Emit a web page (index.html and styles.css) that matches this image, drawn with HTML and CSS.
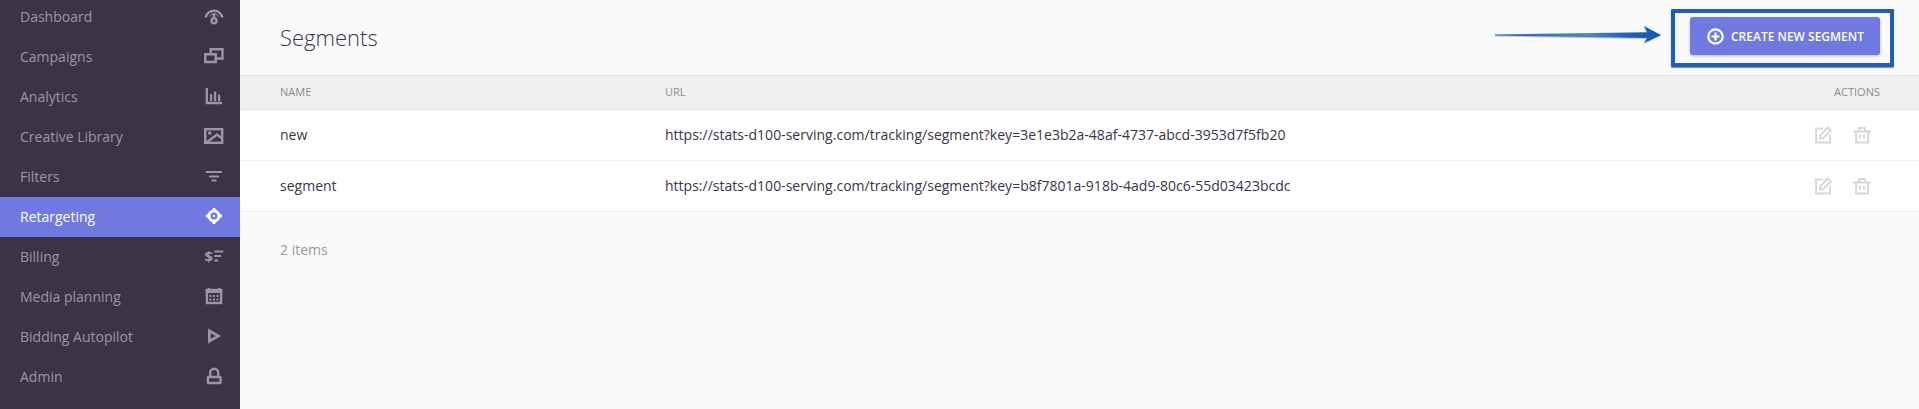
FILE: index.html
```html
<!DOCTYPE html>
<html lang="en">
<head>
<meta charset="utf-8">
<title>Segments</title>
<link rel="stylesheet" href="styles.css">
</head>
<body>
<div class="app">
  <nav class="sidebar">
    <a class="nav-item"><span>Dashboard</span>
      <svg class="ico" viewBox="0 0 20 20"><path d="M1.600 11.500A8.600 8.600 0 0 1 18.400 11.500" fill="none" stroke="currentColor" stroke-width="2.600"/><path d="M5.500 10.500A5 5 0 0 1 14.500 10.500" fill="none" stroke="currentColor" stroke-width="1"/><circle cx="10" cy="14.700" r="2.500" fill="none" stroke="currentColor" stroke-width="2.400"/><rect x="8.800" y="7" width="2.400" height="5" fill="currentColor"/></svg></a>
    <a class="nav-item"><span>Campaigns</span>
      <svg class="ico" viewBox="0 0 20 20"><path d="M1.300 8.300h10.400V16H1.300z M6.700 8.300V3.200h11.800v9.300h-6.800" fill="none" stroke="currentColor" stroke-width="2.400"/></svg></a>
    <a class="nav-item"><span>Analytics</span>
      <svg class="ico" viewBox="0 0 20 20"><path d="M2.800 2v15h15.200" fill="none" stroke="currentColor" stroke-width="2.300"/><path d="M6 8h2.200v7H6zM10 5.500h2.200v9.500H10zM14 8.500h2.200v6.500H14z" fill="currentColor"/></svg></a>
    <a class="nav-item"><span>Creative Library</span>
      <svg class="ico" viewBox="0 0 20 20"><rect x="1.200" y="3.200" width="17" height="13.600" fill="none" stroke="currentColor" stroke-width="2.400"/><circle cx="5.700" cy="7" r="1.800" fill="currentColor"/><path d="M2.500 16.500L13 8.500l5 4" fill="none" stroke="currentColor" stroke-width="2.400"/></svg></a>
    <a class="nav-item"><span>Filters</span>
      <svg class="ico" viewBox="0 0 20 20"><path d="M1.700 6h16.300M5 10.500h10M7.500 14.500h5" fill="none" stroke="currentColor" stroke-width="2.200"/></svg></a>
    <a class="nav-item active"><span>Retargeting</span>
      <svg class="ico" viewBox="0 0 20 20"><circle cx="10" cy="10" r="5" fill="none" stroke="currentColor" stroke-width="3"/><path d="M10 2v4M10 14v4M2 10h4M14 10h4" stroke="currentColor" stroke-width="2.800"/><rect x="9" y="9" width="2" height="2" fill="currentColor"/></svg></a>
    <a class="nav-item"><span>Billing</span>
      <svg class="ico ico-open" viewBox="0 0 20 20"><text class="dollar" x="0.500" y="15.500" fill="currentColor">$</text><path d="M10.300 5.500h9M10.300 10h7M10.300 14.500h4" fill="none" stroke="currentColor" stroke-width="2"/></svg></a>
    <a class="nav-item"><span>Media planning</span>
      <svg class="ico" viewBox="0 0 20 20"><rect x="2.900" y="4" width="14.200" height="13" fill="none" stroke="currentColor" stroke-width="2.400"/><path d="M1.700 3h2v-1h2v1h8.500v-1h2v1h2v4H1.700z" fill="currentColor"/><path d="M5.500 9h2v2h-2zM9 9h2v2H9zM12.500 9h2v2h-2zM5.500 12.500h2v2h-2zM9 12.500h2v2H9zM12.500 12.500h2v2h-2z" fill="currentColor"/></svg></a>
    <a class="nav-item"><span>Bidding Autopilot</span>
      <svg class="ico" viewBox="0 0 20 20"><path d="M5.300 4.800v10.400l9.200-5.200z" fill="none" stroke="currentColor" stroke-width="2.700"/></svg></a>
    <a class="nav-item"><span>Admin</span>
      <svg class="ico" viewBox="0 0 20 20"><path d="M6.200 11V6.800a4 4 0 0 1 8 0V11" fill="none" stroke="currentColor" stroke-width="2.400"/><rect x="3.900" y="11" width="12.600" height="6" rx=".6" fill="none" stroke="currentColor" stroke-width="2.400"/></svg></a>
  </nav>
  <main class="content">
    <header class="topbar">
      <h1 class="title">Segments</h1>
      <div class="callout">
        <svg class="arrow" viewBox="0 0 166 18"><defs><linearGradient id="g" x1="0" x2="1" y1="0" y2="0"><stop offset="0" stop-color="#1d5fb8"/><stop offset=".55" stop-color="#4f86cc"/><stop offset=".8" stop-color="#1d5fb8"/><stop offset="1" stop-color="#145ab0"/></linearGradient></defs><path d="M0 8.400L152 6.200 149 0 166 9 149 17 152 12 0 9.600z" fill="url(#g)"/></svg>
        <div class="highlight">
          <button class="btn"><svg class="plus" viewBox="0 0 17 17"><circle cx="8.500" cy="8.500" r="7.200" fill="none" stroke="currentColor" stroke-width="2.200"/><path d="M8.500 4.500v8M4.500 8.500h8" stroke="currentColor" stroke-width="2.200"/></svg>CREATE NEW SEGMENT</button>
        </div>
      </div>
    </header>
    <div class="row head"><div class="c-name">NAME</div><div class="c-url">URL</div><div class="c-act">ACTIONS</div></div>
    <div class="row body"><div class="c-name">new</div><div class="c-url">https://stats-d100-serving.com/tracking/segment?key=3e1e3b2a-48af-4737-abcd-3953d7f5fb20</div>
      <div class="c-act icons">
        <svg class="act" viewBox="0 0 18 18"><path d="M9 2.500H2v14h14V9" fill="none" stroke="currentColor" stroke-width="2"/><path d="M6 12.500l.6-3.700L13.800 1.500l3 3-7.200 7.300z" fill="none" stroke="currentColor" stroke-width="2"/></svg>
        <svg class="act" viewBox="0 0 18 18"><path d="M0 5.500h18M6 5.500V2h6v3.500M3 5.500V16.500h12V5.500" fill="none" stroke="currentColor" stroke-width="2"/><path d="M7 8.500v4M11 8.500v4" stroke="currentColor" stroke-width="2"/></svg>
      </div></div>
    <div class="row body"><div class="c-name">segment</div><div class="c-url">https://stats-d100-serving.com/tracking/segment?key=b8f7801a-918b-4ad9-80c6-55d03423bcdc</div>
      <div class="c-act icons">
        <svg class="act" viewBox="0 0 18 18"><path d="M9 2.500H2v14h14V9" fill="none" stroke="currentColor" stroke-width="2"/><path d="M6 12.500l.6-3.700L13.800 1.500l3 3-7.200 7.300z" fill="none" stroke="currentColor" stroke-width="2"/></svg>
        <svg class="act" viewBox="0 0 18 18"><path d="M0 5.500h18M6 5.500V2h6v3.500M3 5.500V16.500h12V5.500" fill="none" stroke="currentColor" stroke-width="2"/><path d="M7 8.500v4M11 8.500v4" stroke="currentColor" stroke-width="2"/></svg>
      </div></div>
    <p class="count">2 items</p>
  </main>
</div>
</body>
</html>
```
FILE: styles.css
```css
* { box-sizing: border-box; }
html, body { margin: 0; height: 100%; overflow: hidden; }
body { font-family: "Open Sans", "Liberation Sans", sans-serif; background: #fafafa; color: #3b3346; }
.app { display: flex; height: 409px; }

.sidebar { width: 240px; flex: none; background: #3b3346; overflow: hidden; }
.nav-item { display: flex; align-items: center; justify-content: space-between; height: 40px; padding: 0 16px 2px 20px; font-size: 14px; color: #9c98a3; }
.nav-item:first-child { margin-top: -3px; }
.nav-item.active { background: #6f79df; color: #fff; }
.ico { width: 20px; height: 20px; flex: none; }
.ico-open { overflow: visible; }
.dollar { font-family: "Open Sans", sans-serif; font-weight: 700; font-size: 15px; }

.content { flex: 1; min-width: 0; }
.topbar { height: 75px; display: flex; align-items: flex-start; justify-content: space-between; padding: 9px 25px 0 40px; }
.title { margin: 13px 0 0; font-size: 22px; line-height: 30px; font-weight: 300; color: #3b3346; }
.callout { display: flex; align-items: flex-start; gap: 10px; }
.arrow { width: 166px; height: 18px; flex: none; margin-top: 17px; filter: drop-shadow(0 1px 0 rgba(90,90,90,.35)); }
.highlight { width: 223px; height: 58px; border: 4px solid #1d5fb8; border-radius: 1px; padding: 4px 0 0 15px; box-shadow: 0 1px 1px #888; }
.btn { display: flex; align-items: center; width: 190px; height: 38px; padding: 0 0 0 17px; border: 0; border-radius: 3px; background: #6f79df; color: #fff; font: 600 12px "Open Sans", sans-serif; box-shadow: 0 1px 3px rgba(0,0,0,.25); }
.plus { width: 17px; height: 17px; margin-right: 7px; flex: none; }

.row { display: flex; align-items: center; padding: 0 39px 2px 40px; border-bottom: 1px solid #eee; }
.head { height: 35px; background: #f0f0f0; border-top: 1px solid #e3e3e3; border-bottom: 1px solid #e3e3e3; font-size: 11px; color: #8d8a92; }
.body { height: 51px; background: #fff; font-size: 14px; color: #3b3346; letter-spacing: .012px; }
.c-name { width: 385px; flex: none; }
.c-url { flex: 1; }
.c-act { flex: none; text-align: right; }
.icons { display: flex; gap: 21px; margin: 2px 9px 0 0; color: #d8d8d8; }
.act { width: 18px; height: 18px; }
.count { margin: 28px 40px 0; font-size: 14px; line-height: 20px; color: #9b98a0; }
```
